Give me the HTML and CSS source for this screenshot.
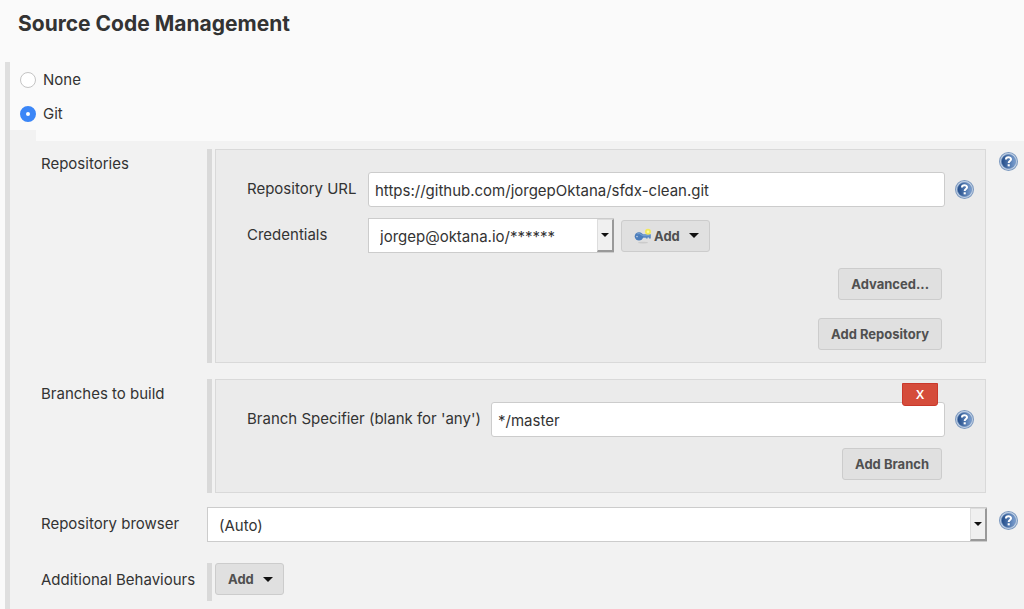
FILE: index.html
```
<!DOCTYPE html>
<html lang="en">

<head>
  <meta charset="UTF-8" />
  <title>Source Code Management</title>
  <link rel="stylesheet" href="styles.css">
</head>

<body>

  <svg class="defs" width="0" height="0" aria-hidden="true">
    <defs>
      <linearGradient id="helpFill" x1="0" y1="0" x2="1" y2="0">
        <stop offset="0" stop-color="#204a87" />
        <stop offset="1" stop-color="#7b9fd0" />
      </linearGradient>
      <symbol id="helpIcon" viewBox="0 0 18 18">
        <circle cx="9" cy="9" r="8.5" fill="#c3d2e6" stroke="#7d9ac0" />
        <circle cx="9" cy="9" r="6.7" fill="url(#helpFill)" stroke="#5f83b5" stroke-width="0.6" />
        <path d="M6.6 7C6.6 4.2 11.4 4.2 11.4 6.9C11.4 8.6 9.2 8.5 9.2 10.4" fill="none" stroke="#fff" stroke-width="1.9" />
        <rect x="8.2" y="11.6" width="2" height="2" fill="#fff" />
      </symbol>
    </defs>
  </svg>

  <h1>Source Code Management</h1>

  <form class="scm">
    <label class="choice"><input type="radio" name="scm"> None</label>
    <label class="choice"><input type="radio" name="scm" checked> Git</label>

    <div class="git">
      <div class="notch"></div>

      <div class="row">
        <div class="name">Repositories</div>
        <div class="repeated">
          <div class="chunk">
            <div class="field">
              <label for="url">Repository URL</label>
              <input type="text" id="url" class="text" value="https://github.com/jorgepOktana/sfdx-clean.git">
              <button type="button" class="help" aria-label="Help"><svg><use href="#helpIcon" /></svg></button>
            </div>
            <div class="field credentials">
              <label for="creds">Credentials</label>
              <span class="select">
                <select id="creds">
                  <option>jorgep@oktana.io/******</option>
                </select>
              </span>
              <button type="button" class="btn">
                <svg class="key" viewBox="0 0 18 16">
                  <ellipse cx="9" cy="14.6" rx="5" ry="0.9" fill="#cbcbcb" />
                  <path d="M8 6.3H16.8V10.4H15V9.6H13.6V10.6H11.9V9.8H8Z" fill="#5b8ac4" />
                  <ellipse cx="5" cy="8.4" rx="4.3" ry="4.2" fill="#4b7dbb" />
                  <path d="M3.2 5.8Q6 4.8 8 7.2H15.5" fill="none" stroke="#7ba5d6" />
                  <circle cx="3" cy="8.6" r="0.8" fill="#c3d2e6" />
                  <circle cx="14" cy="3.8" r="3" fill="#f3e85a" />
                  <circle cx="14" cy="3.8" r="1.3" fill="#fffb9a" />
                </svg>
                Add <span class="caret"></span>
              </button>
            </div>
            <div class="actions">
              <button type="button" class="btn">Advanced...</button>
              <button type="button" class="btn">Add Repository</button>
            </div>
          </div>
        </div>
        <button type="button" class="help help-top" aria-label="Help"><svg><use href="#helpIcon" /></svg></button>
      </div>

      <div class="row">
        <div class="name">Branches to build</div>
        <div class="repeated">
          <div class="chunk">
            <div class="field">
              <label for="branch" class="wide">Branch Specifier (blank for 'any')</label>
              <input type="text" id="branch" class="text" value="*/master">
              <button type="button" class="help" aria-label="Help"><svg><use href="#helpIcon" /></svg></button>
            </div>
            <button type="button" class="delete">X</button>
            <div class="actions branch-actions">
              <button type="button" class="btn">Add Branch</button>
            </div>
          </div>
        </div>
      </div>

      <div class="row browser">
        <label class="name" for="browser">Repository browser</label>
        <span class="select">
          <select id="browser">
            <option>(Auto)</option>
          </select>
        </span>
        <button type="button" class="help help-top" aria-label="Help"><svg><use href="#helpIcon" /></svg></button>
      </div>

      <div class="row behaviours">
        <div class="name">Additional Behaviours</div>
        <div class="repeated">
          <button type="button" class="btn">Add <span class="caret"></span></button>
        </div>
      </div>
    </div>
  </form>

</body>

</html>
```

FILE: styles.css
```
*,
*::before {
  box-sizing: border-box;
}

body {
  margin: 0;
  background: #fafafa;
  color: #333;
  font-family: Inter, "Liberation Sans", sans-serif;
  font-size: 15px;
  line-height: 20px;
}

.defs {
  position: absolute;
}

h1 {
  margin: 0;
  padding: 10px 18px 24px;
  font-size: 21px;
  font-weight: 700;
  line-height: 28px;
}

.scm {
  margin-left: 5px;
  border-left: 5px solid #dfdfdf;
}

.choice {
  display: flex;
  align-items: center;
  gap: 7px;
  height: 34px;
  padding: 2px 0 0 10px;
}

.choice input {
  appearance: none;
  width: 16px;
  height: 16px;
  margin: 0;
  background: #fff;
  border: 1px solid #c4c4c4;
  border-radius: 50%;
}

.choice input:checked {
  border: 6px solid #3b86f7;
}

.git {
  background: #f2f2f2;
}

.notch {
  height: 11px;
  margin-left: 26px;
  background: #fafafa;
}

.row {
  display: flex;
  align-items: flex-start;
  padding: 8px 38px 8px 31px;
}

.name {
  width: 166px;
  flex-shrink: 0;
  padding-top: 5px;
}

.repeated {
  flex: 1;
  padding-left: 3px;
  border-left: 5px solid #d9d9d9;
}

.chunk {
  position: relative;
  padding: 22px 10px 12px 31px;
  background: #ebebeb;
  border: 1px solid #d9d9d9;
}

.field {
  display: flex;
  align-items: center;
}

.field label {
  width: 121px;
  flex-shrink: 0;
  padding-bottom: 2px;
}

.field .wide {
  width: 244px;
}

.text {
  flex: 1;
  min-width: 0;
  height: 35px;
  padding: 2px 6px 0;
  background: #fff;
  border: 1px solid #ccc;
  border-radius: 3px;
  color: #333;
  font: inherit;
}

.credentials {
  padding-top: 11px;
}

.credentials .select {
  width: 246px;
  flex: none;
  margin-right: 7px;
}

.select {
  display: flex;
  flex: 1;
  position: relative;
}

.select select {
  appearance: none;
  width: 100%;
  height: 35px;
  padding: 2px 24px 0 11px;
  background: #fff;
  border: 1px solid #ccc;
  border-radius: 0;
  color: #333;
  font: inherit;
}

/* raised arrow box at the end of the select */
.select::before {
  content: "";
  position: absolute;
  top: 1px;
  right: 0;
  width: 17px;
  height: 33px;
  background: #f0f0f0;
  border: 1px solid #ddd;
  border-right: 2px solid #999;
  border-bottom: 2px solid #999;
  pointer-events: none;
}

.select::after {
  content: "";
  position: absolute;
  top: 15px;
  right: 5px;
  border: 4px solid transparent;
  border-top-color: #111;
  border-bottom: 0;
  pointer-events: none;
}

.btn {
  display: flex;
  align-items: center;
  height: 32px;
  padding: 0 12px;
  background: #e0e0e0;
  border: 1px solid #ccc;
  border-radius: 3px;
  color: #505050;
  font: 700 13px/20px Inter, "Liberation Sans", sans-serif;
}

.key {
  width: 18px;
  height: 16px;
  margin-right: 2px;
}

.caret {
  margin: 0 -2px 0 9px;
  border: 5px solid transparent;
  border-top-color: #111;
  border-bottom: 0;
}

.actions {
  display: flex;
  flex-direction: column;
  align-items: flex-end;
  gap: 18px;
  padding: 15px 33px 0 0;
}

.branch-actions {
  padding-top: 11px;
}

.help {
  width: 20px;
  height: 20px;
  margin-left: 10px;
  padding: 0;
  background: none;
  border: 0;
}

.help svg {
  display: block;
  width: 19px;
  height: 19px;
}

.help-top {
  margin: 2px -33px 0 13px;
}

.delete {
  position: absolute;
  top: 3px;
  right: 47px;
  width: 36px;
  height: 23px;
  padding: 0;
  background: #d54c3b;
  border: 1px solid #c9382b;
  border-radius: 0 0 3px 3px;
  color: #fff;
  font: 600 12px/20px Inter, "Liberation Sans", sans-serif;
}

.browser {
  padding: 6px 37px 13px 31px;
}

.browser .name,
.behaviours .name {
  padding-top: 7px;
}

.browser .help {
  margin: 3px -32px 0 12px;
}

.behaviours .repeated {
  padding-bottom: 6px;
}
```
